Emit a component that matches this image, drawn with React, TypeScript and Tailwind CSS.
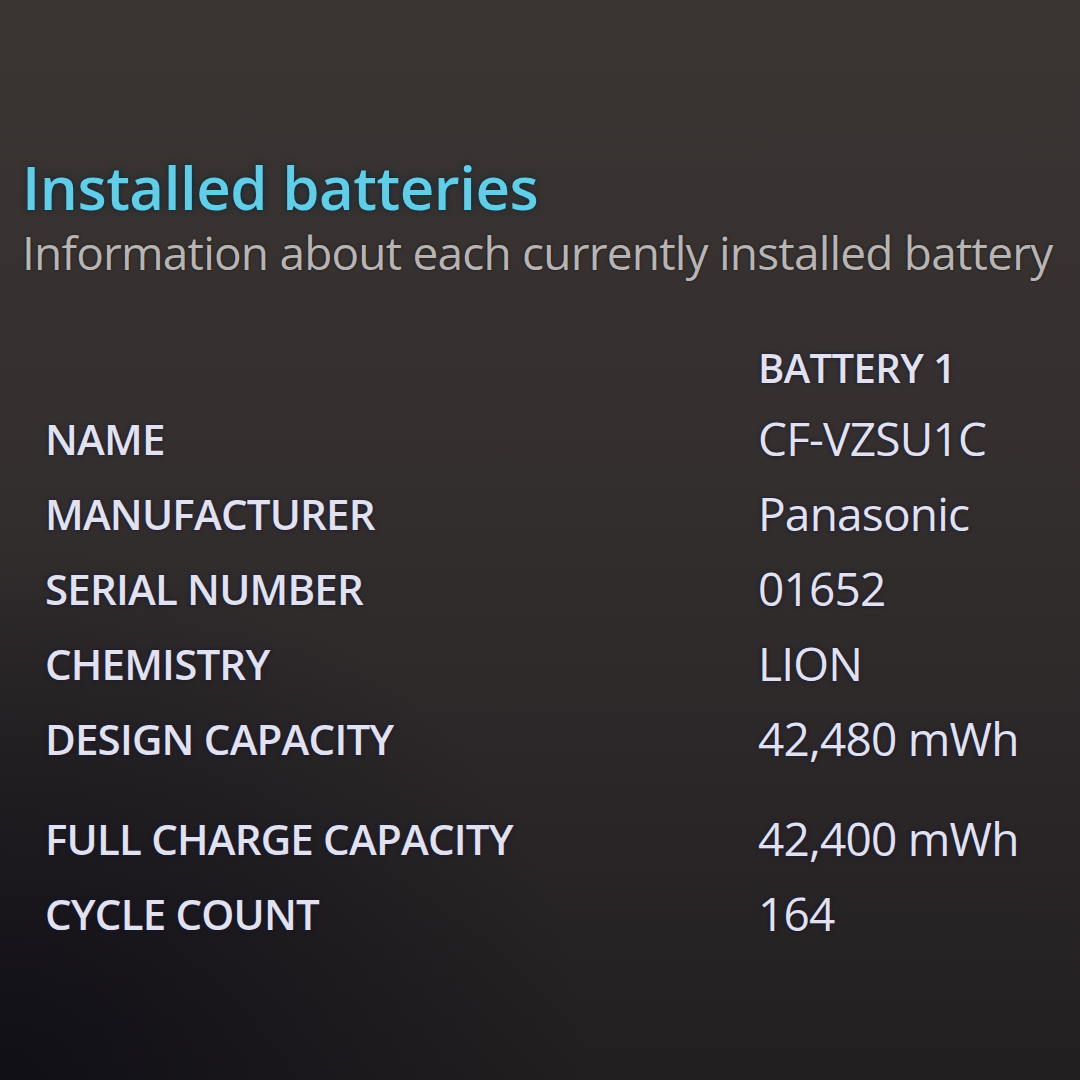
const rows: { label: string; value: string; gap?: boolean }[] = [
  { label: "NAME", value: "CF-VZSU1C" },
  { label: "MANUFACTURER", value: "Panasonic" },
  { label: "SERIAL NUMBER", value: "01652" },
  { label: "CHEMISTRY", value: "LION" },
  { label: "DESIGN CAPACITY", value: "42,480 mWh" },
  { label: "FULL CHARGE CAPACITY", value: "42,400 mWh", gap: true },
  { label: "CYCLE COUNT", value: "164" },
];

export default function App() {
  return (
    <div
      className="h-[1080px] w-[1080px] overflow-hidden bg-[radial-gradient(ellipse_55%_50%_at_0%_100%,rgba(8,8,18,0.7)_0%,rgba(8,8,18,0)_100%),linear-gradient(to_bottom,#3a3533_0%,#35302f_40%,#2a2627_75%,#221f20_100%)] font-['Open_Sans','Noto_Sans',sans-serif]"
    >
      <div className="px-[22px] pt-[150px]">
        {/* Header */}
        <h1 className="text-[60px] leading-[74px] font-semibold tracking-[-0.5px] text-[#62cde6] [text-shadow:0_0_6px_rgba(0,40,60,0.9)]">
          Installed batteries
        </h1>
        <p className="text-[46px] leading-[56px] font-normal tracking-[-0.8px] text-[#b9b4b4] [text-shadow:0_0_3px_rgba(0,0,0,0.6)]">
          Information about each currently installed battery
        </p>
      </div>

      {/* Battery table */}
      <div className="mt-[58px] pl-[45px] text-[#e2e2ef] [text-shadow:0_0_4px_rgba(20,20,60,0.9)]">
        <div className="flex h-[60px] items-end">
          <div className="w-[713px]" />
          <div className="text-[40px] font-semibold tracking-[-0.6px]">
            BATTERY 1
          </div>
        </div>
        {rows.map((row) => (
          <div
            key={row.label}
            className={`flex h-[75px] items-center ${row.gap ? "mt-[25px]" : ""}`}
          >
            <div className="mt-[6px] w-[713px] text-[42px] font-semibold tracking-[-0.8px]">
              {row.label}
            </div>
            <div className="mt-[6px] text-[46px] tracking-[-0.8px]">{row.value}</div>
          </div>
        ))}
      </div>
    </div>
  );
}
